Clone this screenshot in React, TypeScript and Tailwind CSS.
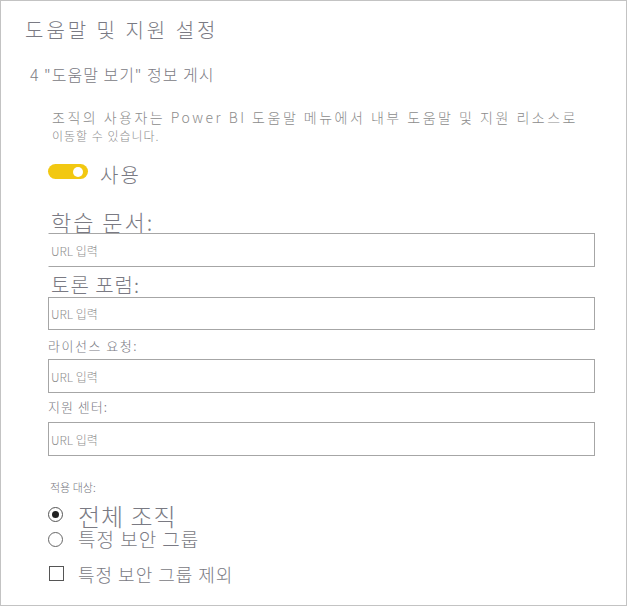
import React from 'react';

const UrlInput: React.FC<{ className?: string; noLeft?: boolean }> = ({ className = '', noLeft }) => (
  <input
    type="text"
    placeholder="URL 입력"
    className={`ml-[47px] w-[547px] border border-[#a6a6a6] bg-white pl-[2px] text-[12px] leading-none font-light outline-none placeholder:text-[#8f8f8f] ${
      noLeft ? 'border-l-white' : ''
    } ${className}`}
  />
);

export default function App() {
  return (
    <div className="w-[627px] h-[606px] border border-[#c3c3c3] bg-white font-['Noto_Sans_CJK_KR',sans-serif] font-light text-[#7a7a83] flex flex-col">
      {/* 제목 */}
      <h1 className="mt-[15px] ml-[24px] text-[20px] leading-[28px] font-light tracking-[3px]">
        도움말 및 지원 설정
      </h1>
      <h2 className="mt-[19px] ml-[29px] text-[16px] leading-[22px] tracking-[1px]">
        4 "도움말 보기" 정보 게시
      </h2>

      {/* 설명 */}
      <p className="mt-[23px] ml-[51px] text-[14px] leading-[18px] tracking-[2.5px] text-[#8c8c8c] whitespace-nowrap">
        조직의 사용자는 Power BI 도움말 메뉴에서 내부 도움말 및 지원 리소스로
      </p>
      <p className="mt-[3px] ml-[51px] text-[12px] leading-[14px] tracking-[1px] text-[#8c8c8c]">
        이동할 수 있습니다.
      </p>

      {/* 토글 */}
      <div className="mt-[20px] ml-[47px] flex items-start gap-[12px]">
        <div className="mt-[1px] w-[40px] h-[15px] rounded-full bg-[#f2c811] flex items-center justify-end pr-[5px]">
          <div className="w-[10px] h-[10px] rounded-full bg-white" />
        </div>
        <span className="text-[20px] leading-[24px] tracking-[2px]">사용</span>
      </div>

      {/* URL 필드 */}
      <label className="mt-[22px] ml-[50px] text-[22px] leading-[24px] tracking-[2px]">학습 문서:</label>
      <UrlInput className="h-[34px]" noLeft />

      <label className="mt-[7px] ml-[50px] text-[20px] leading-[22px] tracking-[1px]">토론 포럼:</label>
      <UrlInput className="mt-[1px] h-[33px]" />

      <label className="mt-[8px] ml-[47px] text-[13px] leading-[16px] tracking-[1.5px]">라이선스 요청:</label>
      <UrlInput className="mt-[5px] h-[34px]" />

      <label className="mt-[6px] ml-[47px] text-[13px] leading-[16px] tracking-[1px]">지원 센터:</label>
      <UrlInput className="mt-[7px] h-[34px]" />

      {/* 적용 대상 */}
      <div className="mt-[24px] ml-[49px] text-[11px] leading-[14px]">적용 대상:</div>

      <div className="mt-[10px] ml-[47px] flex items-start gap-[15px]">
        <div className="mt-[3px] w-[15px] h-[15px] rounded-full border border-[#555] flex items-center justify-center">
          <div className="w-[7px] h-[7px] rounded-full bg-[#222]" />
        </div>
        <span className="text-[24px] leading-[24px] tracking-[1px]">전체 조직</span>
      </div>

      <div className="mt-[1px] ml-[47px] flex items-start gap-[15px]">
        <div className="mt-[3px] w-[15px] h-[15px] rounded-full border border-[#666]" />
        <span className="text-[19px] leading-[19px] tracking-[1px]">특정 보안 그룹</span>
      </div>

      <div className="mt-[16px] ml-[48px] flex items-start gap-[14px]">
        <div className="mt-[2px] w-[15px] h-[15px] border border-[#555]" />
        <span className="text-[18px] leading-[20px] tracking-[1px]">특정 보안 그룹 제외</span>
      </div>
    </div>
  );
}
